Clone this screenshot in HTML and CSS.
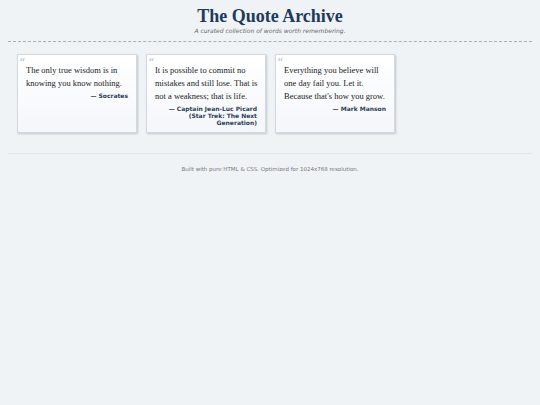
FILE: index.html
```html
<!DOCTYPE html>
<html lang="en">

<head>
    <meta charset="UTF-8">
    <meta name="viewport" content="width=device-width, initial-scale=1.0">
    <title>The Quote Archive</title>

    <link rel="stylesheet" href="styles.css">
</head>

<body>
    <header class="header">
        <h1>The Quote Archive</h1>
        <p class="tagline">A curated collection of words worth remembering.</p>
    </header>

    <main class="quotes">
        <div class="card">
            <span class="mark">&ldquo;</span>
            <p class="text">The only true wisdom is in knowing you know nothing.</p>
            <p class="author">&mdash; Socrates</p>
        </div>
        <div class="card">
            <span class="mark">&ldquo;</span>
            <p class="text">It is possible to commit no mistakes and still lose. That is not a weakness; that is life.</p>
            <p class="author">&mdash; Captain Jean-Luc Picard (Star Trek: The Next Generation)</p>
        </div>
        <div class="card">
            <span class="mark">&ldquo;</span>
            <p class="text">Everything you believe will one day fail you. Let it. Because that's how you grow.</p>
            <p class="author">&mdash; Mark Manson</p>
        </div>
    </main>

    <footer class="footer">
        Built with pure HTML &amp; CSS. Optimized for 1024x768 resolution.
    </footer>
</body>

</html>
```

FILE: styles.css
```css
body {
    font-family: "DejaVu Sans", Verdana, sans-serif;
    background-color: #eff3f6;
    margin: 0;
    padding: 0 8px;
    color: #333;
}

.header {
    text-align: center;
    padding-top: 7px;
    padding-bottom: 6px;
    border-bottom: 1px dashed #a9b0b8;
}

h1 {
    font-family: "Liberation Serif", Georgia, serif;
    font-size: 18px;
    color: #1e3a5c;
    margin: 0;
    line-height: 19px;
}

.tagline {
    font-style: italic;
    font-size: 6px;
    color: #666;
    margin: 1px 0 0;
    line-height: 8px;
}

.quotes {
    display: grid;
    grid-template-columns: repeat(3, 120px);
    gap: 9px;
    padding: 12px 9px 20px;
}

.card {
    min-height: 66px;
    background: linear-gradient(to bottom, #ffffff, #f4f7fb);
    border: 1px solid #d3d9e0;
    box-shadow: 1px 1px 2px rgba(0, 0, 0, 0.18);
    padding: 2px 8px 6px;
}

.mark {
    display: block;
    font-family: "DejaVu Serif", Georgia, serif;
    font-size: 12px;
    line-height: 12px;
    height: 5px;
    color: #a8c8e2;
    margin-left: -7px;
}

.text {
    font-family: "Liberation Serif", Georgia, serif;
    font-size: 8.5px;
    line-height: 13px;
    color: #222;
    margin: 2px -3px 2px 0;
}

.author {
    font-size: 6px;
    font-weight: bold;
    color: #2c3e55;
    text-align: right;
    margin: 0;
    line-height: 7px;
}

.footer {
    border-top: 1px solid #e1e7ec;
    text-align: center;
    font-size: 5.5px;
    color: #777;
    padding-top: 12px;
}
```
